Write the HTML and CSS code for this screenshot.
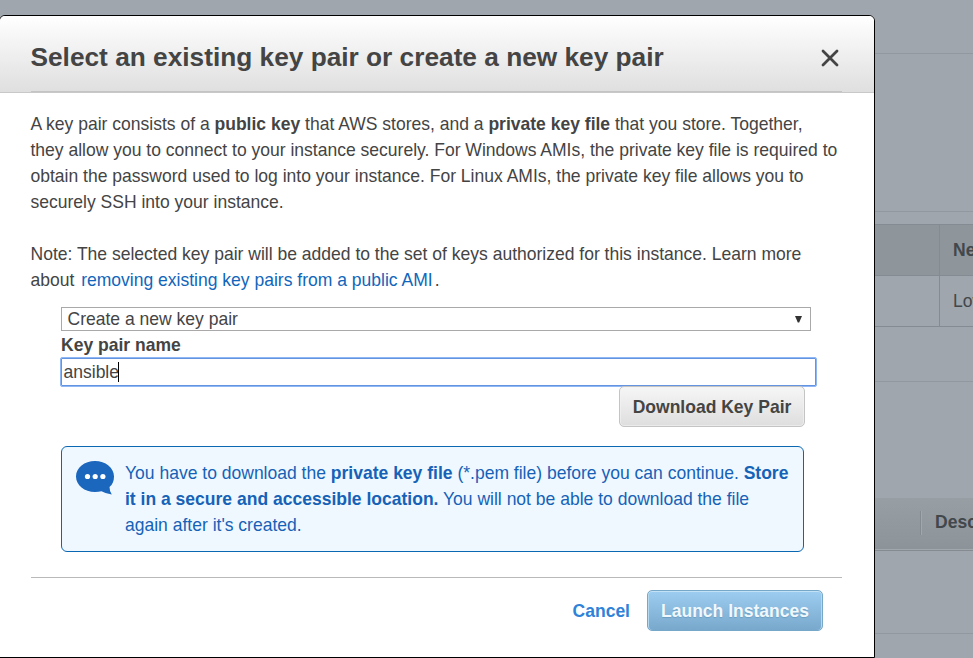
FILE: index.html
```html
<!DOCTYPE html>
<html lang="en">
<head>
<meta charset="utf-8">
<title>Select an existing key pair</title>
<link rel="stylesheet" href="styles.css">
</head>
<body>
<main class="page">
  <div class="strip strip-top"></div>
  <div class="strip strip-summary"></div>
  <div class="table">
    <div class="row row-head"><span class="cell"></span><b class="cell cell-main">Network Performance</b></div>
    <div class="row"><span class="cell"></span><span class="cell cell-main">Low to Moderate</span></div>
  </div>
  <div class="strip strip-gap"></div>
  <div class="strip strip-space"></div>
  <div class="bar"><span class="bar-divider"></span><b>Description</b></div>
  <div class="strip strip-rule"></div>
</main>
<section class="dialog" role="dialog">
  <header class="header">
    <div class="header-inner">
      <h1 class="title">Select an existing key pair or create a new key pair</h1>
      <svg class="close" viewBox="0 0 18 18"><path d="M2 2 16 16M16 2 2 16"/></svg>
    </div>
  </header>
  <div class="content">
    <p class="text">
      <span class="line">A key pair consists of a <b>public key</b> that AWS stores, and a <b>private key file</b> that you store. Together,</span>
      <span class="line">they allow you to connect to your instance securely. For Windows AMIs, the private key file is required to</span>
      <span class="line">obtain the password used to log into your instance. For Linux AMIs, the private key file allows you to</span>
      <span class="line">securely SSH into your instance.</span>
    </p>
    <p class="text note">
      <span class="line">Note: The selected key pair will be added to the set of keys authorized for this instance. Learn more</span>
      <span class="line">about <a class="link">removing existing key pairs from a public AMI</a><span class="dot">.</span></span>
    </p>
    <div class="form">
      <div class="select"><span>Create a new key pair</span><svg class="arrow" viewBox="0 0 7 7"><path d="M0 0H7L4.200 6.500H2.800Z"/></svg></div>
      <div class="label">Key pair name</div>
      <div class="input"><span>ansible</span><i class="caret"></i></div>
      <div class="download-row"><div class="button download"><span>Download Key Pair</span></div></div>
      <div class="notice">
        <svg class="bubble" viewBox="0 0 38 34"><path d="M19 0C29.500 0 38 6.800 38 15.500C38 20 36.500 23.500 33.500 26Q33.500 30 35.800 33.500Q30 32.800 25.500 30.200C23.500 30.800 21.300 31 19 31C8.500 31 0 24.200 0 15.500C0 6.800 8.500 0 19 0Z"/><circle cx="11.500" cy="15.500" r="2.600"/><circle cx="19.200" cy="15.500" r="2.600"/><circle cx="26.900" cy="15.500" r="2.600"/></svg>
        <div class="notice-text">
          <span class="line">You have to download the <b>private key file</b> (*.pem file) before you can continue. <b>Store</b></span>
          <span class="line"><b>it in a secure and accessible location.</b> You will not be able to download the file</span>
          <span class="line">again after it's created.</span>
        </div>
      </div>
    </div>
    <footer class="footer">
      <a class="cancel">Cancel</a>
      <div class="button launch"><span>Launch Instances</span></div>
    </footer>
  </div>
</section>
</body>
</html>
```
FILE: styles.css
```css
* { box-sizing: border-box; }
body {
  margin: 0;
  width: 973px;
  height: 658px;
  overflow: hidden;
  position: relative;
  background: #9fa6ad;
  color: #444;
  font: 17.53px/26px "Liberation Sans", Arial, sans-serif;
}
.page {
  width: 98px;
  margin-left: 875px;
  overflow: hidden;
  color: #42474c;
  white-space: nowrap;
}
.strip { border-bottom: 1px solid #9298a0; }
.strip-top { height: 54px; }
.strip-summary { height: 158px; margin-bottom: 12px; }
.strip-gap { height: 55px; }
.strip-space { height: 116px; border: 0; }
.strip-rule { height: 83px; }
.table { border-top: 1px solid #858b93; }
.row { display: flex; height: 51px; border-bottom: 1px solid #858b93; }
.row-head { background: #8f969b; }
.cell { flex: 0 0 64px; line-height: 50px; }
.cell-main { flex: 0 0 220px; border-left: 1px solid #858b93; padding-left: 13px; }
.bar {
  display: flex;
  align-items: center;
  height: 53px;
  padding-bottom: 4px;
  border-bottom: 1px solid #858b91;
  background: linear-gradient(#979ea4, #8d9499 51px, #a1a8ad 51px);
}
.bar-divider {
  flex: 0 0 2px;
  height: 24px;
  margin: 2px 13px 0 45px;
  border-left: 1px solid #858c91;
  border-right: 1px solid #a1a8ad;
}
.dialog {
  position: absolute;
  left: -1px;
  top: 15px;
  width: 876px;
  height: 643px;
  border: 1px solid #000;
  border-radius: 6px 6px 0 0;
  background: #fff;
  overflow: hidden;
}
.header {
  height: 77px;
  padding: 0 32px 0 31px;
  border-bottom: 1px solid #c8c8c8;
  background: linear-gradient(#fff, #dfdfdf);
}
.header-inner {
  display: flex;
  align-items: center;
  justify-content: space-between;
  height: 76px;
  padding: 6px 3px 0 0;
  border-bottom: 1px solid #c4c4c4;
}
.title { margin: 0 0 0 -0.5px; font-size: 26.25px; line-height: 36px; white-space: nowrap; }
.close { width: 18px; height: 18px; margin-top: 2px; fill: none; stroke: #444; stroke-width: 2.8; stroke-linecap: round; }
.content { padding: 18px 32px 0 31px; }
.text { margin: 0 0 0 -0.5px; }
.note { margin-top: 26px; }
.line { display: block; white-space: nowrap; }
.link { color: #1166bb; margin-left: 2px; }
.dot { margin-left: 2px; }
.form { margin: 14px 0 0 30px; }
.select {
  display: flex;
  align-items: center;
  justify-content: space-between;
  width: 750px;
  height: 24px;
  padding: 0 8px 0 5.5px;
  border: 1px solid #a9a9a9;
}
.arrow { width: 7px; height: 7px; fill: #333; }
.label { margin: 1px 0 -1px; font-weight: bold; }
.input {
  display: flex;
  align-items: center;
  width: 757px;
  height: 30px;
  margin: 0 0 0 -1px;
  padding-left: 2.5px;
  border: 1px solid #8fb6f5;
  border-radius: 2px;
  box-shadow: inset 0 0 0 1px #6494e0;
}
.caret { width: 1px; height: 20px; margin-left: -1px; background: #000; }
.button {
  display: flex;
  align-items: center;
  justify-content: center;
  height: 41px;
  border-radius: 5px;
  font-weight: bold;
  white-space: nowrap;
}
.download-row { display: flex; margin-top: -1px; padding-left: 558px; }
.download {
  width: 186px;
  border: 1px solid #c4c4c4;
  background: linear-gradient(#f6f6f6, #dedede);
  box-shadow: inset 0 0 0 1px #f4f4f499;
}
.notice {
  display: flex;
  width: 743px;
  height: 106px;
  margin-top: 19px;
  padding: 13px 0 0 14px;
  border: 1px solid #0a67b2;
  border-radius: 6px;
  background: #f0f8ff;
  color: #1562b7;
}
.bubble { flex: none; width: 38px; height: 34px; margin: 1px 11px 0 0; fill: #1b67be; }
.bubble circle { fill: #fff; }
.footer {
  display: flex;
  align-items: center;
  justify-content: flex-end;
  height: 54px;
  margin-top: 25px;
  padding: 12px 19px 0 0;
  border-top: 1px solid #b9b9b9;
}
.cancel { margin-right: 17px; color: #2e82d8; font-weight: bold; }
.launch {
  width: 176px;
  margin-top: -1px;
  padding-top: 1px;
  border: 1px solid #76a8ca;
  background: linear-gradient(#9dcef1, #78a9cd);
  box-shadow: inset 0 1px 0 0 #c4e2f6, inset 1px 0 0 #b4d8f0, inset -1px 0 0 #b4d8f0;
  color: #f0f8fd;
  text-shadow: 0 1px 1px #6d9ec0;
}
```
